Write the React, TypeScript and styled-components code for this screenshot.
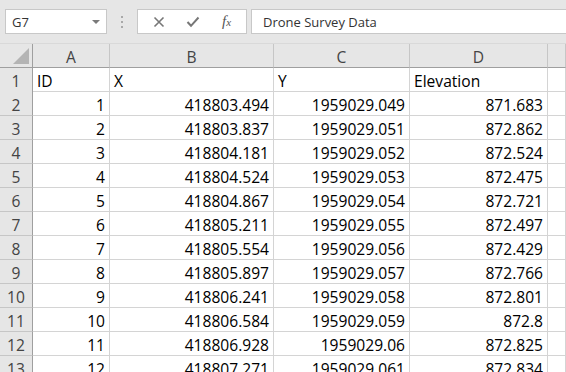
import React from 'react';
import styled, { createGlobalStyle } from 'styled-components';

const GlobalStyle = createGlobalStyle`
    html, body {
        margin: 0;
        padding: 0;
        background: #ffffff;
        overflow: hidden;
    }
    body {
        font-family: "Open Sans", "Liberation Sans", sans-serif;
    }
`;

const Window = styled.div`
    width: 566px;
    height: 372px;
    overflow: hidden;
    display: flex;
    flex-direction: column;
`;

const Toolbar = styled.div`
    height: 44px;
    flex: none;
    background: #e6e6e6;
    display: flex;
    align-items: center;
    padding-left: 5px;
    box-sizing: border-box;
    border-bottom: 1px solid #d9d9d9;
`;

const NameBox = styled.div`
    width: 102px;
    height: 25px;
    background: #fff;
    border: 1px solid #c8c8c8;
    box-sizing: border-box;
    display: flex;
    align-items: center;
    justify-content: space-between;
    padding: 0 6px 0 6px;
    font-size: 13px;
    color: #333;
`;

const Caret = styled.span`
    width: 0;
    height: 0;
    border-left: 4px solid transparent;
    border-right: 4px solid transparent;
    border-top: 4px solid #7a7a7a;
`;

const Grip = styled.div`
    width: 30px;
    display: flex;
    flex-direction: column;
    align-items: center;
    gap: 3px;
    span {
        width: 2px;
        height: 2px;
        background: #a8a8a8;
    }
`;

const ButtonBox = styled.div`
    width: 110px;
    height: 25px;
    background: #fff;
    border: 1px solid #c8c8c8;
    box-sizing: border-box;
    display: flex;
    align-items: center;
    justify-content: space-around;
    padding: 0 4px;
`;

const Fx = styled.span`
    font-family: "Liberation Serif", serif;
    font-style: italic;
    font-size: 15px;
    color: #555;
    sub {
        font-size: 11px;
        vertical-align: baseline;
    }
`;

const Formula = styled.div`
    flex: 1;
    height: 25px;
    margin-left: 4px;
    background: #fff;
    border: 1px solid #c8c8c8;
    border-right: none;
    box-sizing: border-box;
    display: flex;
    align-items: center;
    padding-left: 11px;
    font-size: 13px;
    color: #333;
`;

const Sheet = styled.div`
    display: grid;
    grid-template-columns: 33px 77px 164px 136px 138px 1fr;
    grid-auto-rows: 24px;
    font-size: 15.6px;
    color: #000;
`;

const HeadCell = styled.div<{ $corner?: boolean; $row?: boolean }>`
    background: #e6e6e6;
    color: #444;
    display: flex;
    align-items: center;
    justify-content: center;
    box-sizing: border-box;
    border-right: 1px solid ${(p) => (p.$row || p.$corner ? '#9f9f9f' : '#c6c6c6')};
    border-bottom: 1px solid ${(p) => (p.$row ? '#c6c6c6' : '#9f9f9f')};
    position: relative;
    padding-top: 2px;
`;

const Corner = styled.div`
    position: absolute;
    right: 3px;
    bottom: 3px;
    width: 0;
    height: 0;
    border-left: 16px solid transparent;
    border-bottom: 16px solid #b4b4b4;
`;

const Cell = styled.div<{ $align?: 'left' | 'right' }>`
    box-sizing: border-box;
    border-right: 1px solid #d4d4d4;
    border-bottom: 1px solid #d4d4d4;
    display: flex;
    align-items: center;
    justify-content: ${(p) => (p.$align === 'right' ? 'flex-end' : 'flex-start')};
    padding: 3px 4px 0 4px;
    white-space: nowrap;
    overflow: hidden;
`;

const rows: [number, string, string, string][] = [
    [1, '418803.494', '1959029.049', '871.683'],
    [2, '418803.837', '1959029.051', '872.862'],
    [3, '418804.181', '1959029.052', '872.524'],
    [4, '418804.524', '1959029.053', '872.475'],
    [5, '418804.867', '1959029.054', '872.721'],
    [6, '418805.211', '1959029.055', '872.497'],
    [7, '418805.554', '1959029.056', '872.429'],
    [8, '418805.897', '1959029.057', '872.766'],
    [9, '418806.241', '1959029.058', '872.801'],
    [10, '418806.584', '1959029.059', '872.8'],
    [11, '418806.928', '1959029.06', '872.825'],
    [12, '418807.271', '1959029.061', '872.834'],
];

const App = () => (
    <Window>
        <GlobalStyle />
        <Toolbar>
            <NameBox>
                G7
                <Caret />
            </NameBox>
            <Grip>
                <span />
                <span />
                <span />
            </Grip>
            <ButtonBox>
                <svg width="12" height="12" viewBox="0 0 12 12">
                    <path d="M1.5 1.5 L10.5 10.5 M10.5 1.5 L1.5 10.5" stroke="#777" strokeWidth="1.6" />
                </svg>
                <svg width="14" height="12" viewBox="0 0 14 12">
                    <path d="M1.5 6 L5 9.8 L12.5 1.5" stroke="#777" strokeWidth="2" fill="none" />
                </svg>
                <Fx>
                    f<sub>x</sub>
                </Fx>
            </ButtonBox>
            <Formula>Drone Survey Data</Formula>
        </Toolbar>
        <Sheet>
            <HeadCell $corner>
                <Corner />
            </HeadCell>
            <HeadCell>A</HeadCell>
            <HeadCell>B</HeadCell>
            <HeadCell>C</HeadCell>
            <HeadCell>D</HeadCell>
            <HeadCell />

            <HeadCell $row style={{ height: 25 }}>1</HeadCell>
            <Cell>ID</Cell>
            <Cell>X</Cell>
            <Cell>Y</Cell>
            <Cell>Elevation</Cell>
            <Cell />

            {rows.map(([id, x, y, z]) => (
                <React.Fragment key={id}>
                    <HeadCell $row>{id + 1}</HeadCell>
                    <Cell $align="right">{id}</Cell>
                    <Cell $align="right">{x}</Cell>
                    <Cell $align="right">{y}</Cell>
                    <Cell $align="right">{z}</Cell>
                    <Cell />
                </React.Fragment>
            ))}
        </Sheet>
    </Window>
);

export default App;
